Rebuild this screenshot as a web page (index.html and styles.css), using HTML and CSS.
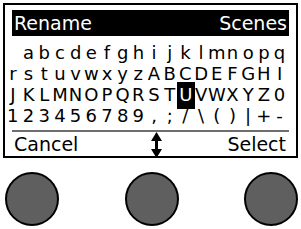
FILE: index.html
```html
<!DOCTYPE html>
<html>
<head>
<meta charset="utf-8">
<link rel="stylesheet" href="styles.css">
</head>
<body>
<div class="screen">
  <div class="titlebar"><span>Rename</span><span>Scenes</span></div>
  <div class="grid">
    <span></span><span>a</span><span>b</span><span>c</span><span>d</span><span>e</span><span>f</span><span>g</span><span>h</span><span>i</span><span>j</span><span>k</span><span>l</span><span>m</span><span>n</span><span>o</span><span>p</span><span>q</span>
    <span>r</span><span>s</span><span>t</span><span>u</span><span>v</span><span>w</span><span>x</span><span>y</span><span>z</span><span>A</span><span>B</span><span>C</span><span>D</span><span>E</span><span>F</span><span>G</span><span>H</span><span>I</span>
    <span>J</span><span>K</span><span>L</span><span>M</span><span>N</span><span>O</span><span>P</span><span>Q</span><span>R</span><span>S</span><span>T</span><span class="sel">U</span><span>V</span><span>W</span><span>X</span><span>Y</span><span>Z</span><span>0</span>
    <span>1</span><span>2</span><span>3</span><span>4</span><span>5</span><span>6</span><span>7</span><span>8</span><span>9</span><span>,</span><span>;</span><span>/</span><span>\</span><span>(</span><span>)</span><span>|</span><span>+</span><span>-</span>
  </div>
  <div class="sep"></div>
  <div class="softkeys">
    <span class="key">Cancel</span>
    <svg class="updown" width="11" height="26" viewBox="0 0 11 26"><polygon points="5.5,0 0,9 11,9" fill="#000"/><rect x="4" y="8" width="3" height="10" fill="#000"/><polygon points="0,17 11,17 5.5,26" fill="#000"/></svg>
    <span class="key">Select</span>
  </div>
</div>
<div class="buttons">
  <div class="btn"></div>
  <div class="btn"></div>
  <div class="btn"></div>
</div>
</body>
</html>
```
FILE: styles.css
```css
html, body {
  margin: 0;
  padding: 0;
  background: #fff;
}
body {
  width: 301px;
  height: 229px;
  overflow: hidden;
  font-family: "DejaVu Sans", Verdana, sans-serif;
  color: #000;
}
.screen {
  box-sizing: border-box;
  margin: 3px 0 0 3px;
  width: 295px;
  height: 155px;
  border: 2px solid #000;
  display: flex;
  flex-direction: column;
}
.titlebar {
  margin: 5px 7px 0 7px;
  height: 26px;
  background: #000;
  color: #fff;
  font-size: 19px;
  line-height: 26px;
  display: flex;
  justify-content: space-between;
  padding: 0 2px;
}
.grid {
  margin-top: 6px;
  display: grid;
  grid-template-columns: repeat(18, 15.7px);
  grid-auto-rows: 21px;
  font-size: 18px;
  line-height: 21px;
}
.grid span {
  white-space: nowrap;
  display: flex;
  justify-content: center;
}
.grid .sel {
  background: #000;
  color: #fff;
  margin: -2px -2px -4px -1px;
  padding-top: 2px;
}
.sep {
  margin: 4px 7px 0 7px;
  height: 2px;
  background: #6e6e6e;
}
.softkeys {
  height: 24px;
  display: flex;
  justify-content: space-between;
  align-items: flex-start;
  padding: 0 10px 0 9px;
  font-size: 19px;
  line-height: 24px;
}
.updown {
  display: block;
  margin-left: 8px;
}
.buttons {
  margin-top: 14px;
  display: flex;
  justify-content: space-between;
  padding: 0 3px 0 5px;
}
.btn {
  box-sizing: border-box;
  width: 54px;
  height: 54px;
  border-radius: 50%;
  background: #5f5f5f;
  border: 2px solid #000;
}
```
